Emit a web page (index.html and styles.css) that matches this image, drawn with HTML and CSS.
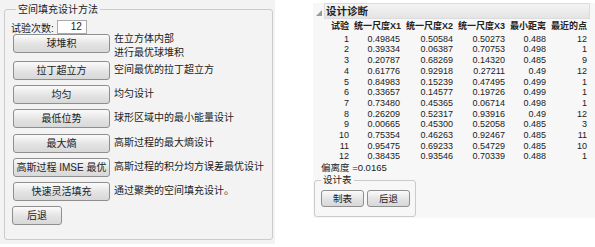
FILE: index.html
```html
<!DOCTYPE html>
<html lang="zh-CN">
<head>
    <meta charset="UTF-8">
    <title>空间填充设计</title>
    <link rel="stylesheet" href="styles.css">
</head>
<body>
    <div class="left-panel">
        <fieldset class="method-box">
            <legend>空间填充设计方法</legend>
            <div class="trials">
                <span>试验次数:</span>
                <div class="num-field">12</div>
            </div>
            <div class="method-row tall">
                <div class="btn wide">球堆积</div>
                <div class="desc">在立方体内部<br>进行最优球堆积</div>
            </div>
            <div class="method-row">
                <div class="btn wide">拉丁超立方</div>
                <div class="desc">空间最优的拉丁超立方</div>
            </div>
            <div class="method-row">
                <div class="btn wide">均匀</div>
                <div class="desc">均匀设计</div>
            </div>
            <div class="method-row">
                <div class="btn wide">最低位势</div>
                <div class="desc">球形区域中的最小能量设计</div>
            </div>
            <div class="method-row">
                <div class="btn wide">最大熵</div>
                <div class="desc">高斯过程的最大熵设计</div>
            </div>
            <div class="method-row">
                <div class="btn wide">高斯过程 IMSE 最优</div>
                <div class="desc">高斯过程的积分均方误差最优设计</div>
            </div>
            <div class="method-row">
                <div class="btn wide">快速灵活填充</div>
                <div class="desc">通过聚类的空间填充设计。</div>
            </div>
            <div class="btn back">后退</div>
        </fieldset>
    </div>

    <div class="right-panel">
        <div class="outline-head">
            <svg class="tri" width="6" height="6" viewBox="0 0 6 6"><path d="M6 0 L6 6 L0 6 Z" fill="#9a9a9a"/></svg>
            <div class="outline-title">设计诊断</div>
        </div>
        <table class="diag">
            <thead>
                <tr><th>试验</th><th>统一尺度X1</th><th>统一尺度X2</th><th>统一尺度X3</th><th>最小距离</th><th>最近的点</th></tr>
            </thead>
            <tbody>
                <tr><td>1</td><td>0.49845</td><td>0.50584</td><td>0.50273</td><td>0.488</td><td>12</td></tr>
                <tr><td>2</td><td>0.39334</td><td>0.06387</td><td>0.70753</td><td>0.498</td><td>1</td></tr>
                <tr><td>3</td><td>0.20787</td><td>0.68269</td><td>0.14320</td><td>0.485</td><td>9</td></tr>
                <tr><td>4</td><td>0.61776</td><td>0.92918</td><td>0.27211</td><td>0.49</td><td>12</td></tr>
                <tr><td>5</td><td>0.84983</td><td>0.15239</td><td>0.47495</td><td>0.499</td><td>1</td></tr>
                <tr><td>6</td><td>0.33657</td><td>0.14577</td><td>0.19726</td><td>0.499</td><td>1</td></tr>
                <tr><td>7</td><td>0.73480</td><td>0.45365</td><td>0.06714</td><td>0.498</td><td>1</td></tr>
                <tr><td>8</td><td>0.26209</td><td>0.52317</td><td>0.93916</td><td>0.49</td><td>12</td></tr>
                <tr><td>9</td><td>0.00665</td><td>0.45300</td><td>0.52058</td><td>0.485</td><td>3</td></tr>
                <tr><td>10</td><td>0.75354</td><td>0.46263</td><td>0.92467</td><td>0.485</td><td>11</td></tr>
                <tr><td>11</td><td>0.95475</td><td>0.69233</td><td>0.54729</td><td>0.485</td><td>10</td></tr>
                <tr><td>12</td><td>0.38435</td><td>0.93546</td><td>0.70339</td><td>0.488</td><td>1</td></tr>
            </tbody>
        </table>
        <div class="discrepancy">偏离度 =0.0165</div>
        <fieldset class="table-box">
            <legend>设计表</legend>
            <div class="btn small">制表</div>
            <div class="btn small">后退</div>
        </fieldset>
    </div>
</body>
</html>
```

FILE: styles.css
```css
body {
    margin: 0;
    background: #fff;
    font-family: "Liberation Sans", "Noto Sans CJK SC", sans-serif;
    color: #222;
    display: flex;
    align-items: flex-start;
}
.left-panel {
    width: 275px;
    height: 244px;
    box-sizing: border-box;
    background: #f3f3f3;
    padding: 3px 4px 0 4px;
}
.method-box {
    margin: 0;
    height: 237px;
    box-sizing: border-box;
    border: 1px solid #cbcbcb;
    border-radius: 3px;
    padding: 0 8px 0 8px;
}
.method-box legend {
    font-size: 10px;
    line-height: 13px;
    padding: 0 2px;
    margin-left: 3px;
}
.trials {
    display: flex;
    align-items: center;
    gap: 3px;
    font-size: 10px;
    margin: 4px 0 0 -2px;
    height: 14px;
}
.num-field {
    width: 30px;
    height: 14px;
    box-sizing: border-box;
    background: #fff;
    border: 1px solid #aaa;
    text-align: right;
    padding-right: 4px;
    line-height: 12px;
}
.method-row {
    display: flex;
    align-items: flex-start;
    gap: 4px;
    height: 19px;
    margin-bottom: 5.2px;
}
.method-row:first-of-type {
    margin-top: 5px;
}
.method-row.tall {
    margin-bottom: 8px;
}
.btn {
    box-sizing: border-box;
    height: 19px;
    border: 1px solid #8f8f8f;
    border-radius: 3px;
    background: linear-gradient(#fbfbfb, #e3e3e3 55%, #d8d8d8);
    font-size: 10px;
    line-height: 17px;
    text-align: center;
    white-space: nowrap;
    color: #222;
}
.btn.wide {
    width: 97px;
    flex: none;
}
.desc {
    font-size: 10px;
    line-height: 13px;
    padding-top: 2px;
    white-space: nowrap;
}
.tall .desc {
    padding-top: 0;
    margin-top: -2px;
    line-height: 13.5px;
}
.btn.back {
    width: 50px;
    margin-left: -1px;
}

.right-panel {
    margin-left: 38px;
    margin-top: 3px;
    width: 282px;
    height: 215px;
    background: #f7f7f7;
    box-sizing: border-box;
}
.outline-head {
    display: flex;
    align-items: center;
    height: 16px;
    margin-left: 3px;
}
.tri {
    margin: 3px 2px 0 0;
}
.outline-title {
    flex: 1;
    height: 16px;
    margin-right: 5px;
    background: linear-gradient(#f4f4f4, #e4e4e4);
    border: 1px solid #dcdcdc;
    box-sizing: border-box;
    font-size: 10.5px;
    font-weight: bold;
    line-height: 14px;
    padding-left: 1px;
}
.diag {
    border-collapse: collapse;
    margin-left: 12px;
    margin-top: 2px;
    font-size: 9px;
}
.diag th, .diag td {
    padding: 0;
    text-align: right;
    line-height: 10.7px;
    white-space: nowrap;
}
.diag th {
    font-weight: bold;
    padding-bottom: 2px;
}
.diag th:nth-child(1) { width: 24px; }
.diag th:nth-child(2) { width: 52px; }
.diag th:nth-child(3) { width: 52px; }
.diag th:nth-child(4) { width: 52px; }
.diag th:nth-child(5) { width: 41px; }
.diag th:nth-child(6) { width: 41px; }
.diag td:nth-child(2) { padding-right: 1px; }
.discrepancy {
    font-size: 9.5px;
    margin: 0 0 0 8px;
    line-height: 12px;
}
.table-box {
    margin: 0 0 0 1px;
    width: 101px;
    box-sizing: border-box;
    border: 1px solid #cbcbcb;
    border-radius: 3px;
    padding: 4px 5px 9px 6px;
    display: flex;
    gap: 3px;
}
.table-box legend {
    font-size: 9.5px;
    line-height: 12px;
    padding: 0 2px;
    margin-left: 0;
}
.btn.small {
    width: 43px;
    height: 17px;
    line-height: 15px;
    font-size: 9.5px;
}
```
